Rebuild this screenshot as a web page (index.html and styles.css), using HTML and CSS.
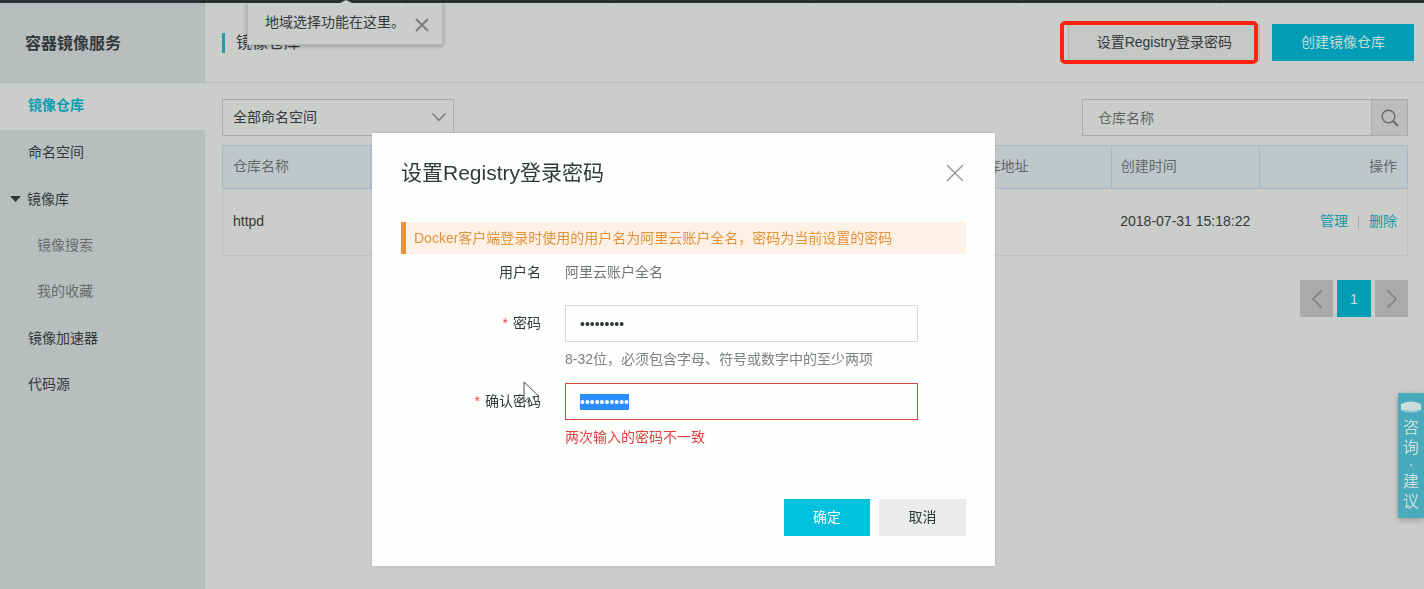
FILE: index.html
```html
<!DOCTYPE html>
<html lang="zh-CN">
<head>
<meta charset="utf-8">
<title>容器镜像服务</title>
<link rel="stylesheet" href="styles.css">
</head>
<body>
<div class="topbar"><span></span><span></span><span></span><span></span><span></span><span></span></div>

<div class="layout">
  <aside class="sidebar">
    <div class="brand">容器镜像服务</div>
    <nav>
      <a class="nav-item active" href="#">镜像仓库</a>
      <a class="nav-item" href="#">命名空间</a>
      <a class="nav-item nav-parent" href="#"><svg class="caret" viewBox="0 0 11 6"><path d="M0 0h11L5.500 6z"/></svg>镜像库</a>
      <div class="nav-sub">
        <a class="nav-item" href="#">镜像搜索</a>
        <a class="nav-item" href="#">我的收藏</a>
      </div>
      <a class="nav-item" href="#">镜像加速器</a>
      <a class="nav-item" href="#">代码源</a>
    </nav>
  </aside>

  <main class="main">
    <header class="page-head">
      <h1>镜像仓库</h1>
      <div class="actions">
        <div class="marked"><button class="btn btn-default" type="button">设置Registry登录密码</button></div>
        <button class="btn btn-create" type="button">创建镜像仓库</button>
      </div>
      <div class="tip" role="status">
        <span>地域选择功能在这里。</span>
        <button class="tip-close" type="button" aria-label="关闭提示"><svg viewBox="0 0 14 14"><path d="M1 1l12 12M13 1L1 13"/></svg></button>
      </div>
    </header>

    <section class="content">
      <div class="filters">
        <div class="select-wrap">
          <select aria-label="命名空间"><option>全部命名空间</option></select>
          <svg viewBox="0 0 14 8"><path d="M.5.5L7 7.300 13.500.5"/></svg>
        </div>
        <form class="search">
          <input type="text" placeholder="仓库名称" aria-label="仓库名称">
          <button type="button" aria-label="搜索"><svg viewBox="0 0 18 18"><circle cx="7.500" cy="7.500" r="6.300"/><path class="handle" d="M12 12l5 5"/></svg></button>
        </form>
      </div>

      <table class="repos">
        <thead>
          <tr><th>仓库名称</th><th colspan="4"></th><th>仓库地址</th><th>创建时间</th><th class="ops">操作</th></tr>
        </thead>
        <tbody>
          <tr><td>httpd</td><td colspan="4"></td><td></td><td>2018-07-31 15:18:22</td><td class="ops"><a href="#">管理</a><i></i><a href="#">删除</a></td></tr>
        </tbody>
      </table>

      <nav class="pager" aria-label="分页">
        <button type="button" aria-label="上一页"><svg viewBox="0 0 10 18"><path d="M9.500.5L1 9l8.500 8.500"/></svg></button>
        <button class="current" type="button">1</button>
        <button type="button" aria-label="下一页"><svg viewBox="0 0 10 18"><path d="M.5.5L9 9 .5 17.500"/></svg></button>
      </nav>
    </section>
  </main>
</div>

<a class="feedback" href="#">
  <svg viewBox="0 0 22 12"><path d="M1 3Q11-2 21 3v6Q11 14 1 9z"/><path class="lid" d="M2 9Q11 12 20 9"/></svg>
  <span>咨</span><span>询</span><span class="dot">·</span><span>建</span><span>议</span>
</a>

<div class="overlay">
  <div class="modal" role="dialog" aria-labelledby="dlg-title">
    <div class="modal-head">
      <h2 id="dlg-title">设置Registry登录密码</h2>
      <button type="button" aria-label="关闭"><svg viewBox="0 0 18 18"><path d="M1 1l16 16M17 1L1 17"/></svg></button>
    </div>
    <p class="notice">Docker客户端登录时使用的用户名为阿里云账户全名，密码为当前设置的密码</p>
    <form class="form">
      <span class="label">用户名</span>
      <div class="value">阿里云账户全名</div>

      <label class="label" for="pwd"><b>*</b>密码</label>
      <div class="field">
        <input id="pwd" type="password" value="registry1">
        <p>8-32位，必须包含字母、符号或数字中的至少两项</p>
      </div>

      <label class="label" for="pwd2"><b>*</b>确认密码</label>
      <div class="field invalid">
        <input id="pwd2" type="password" value="registry12">
        <p>两次输入的密码不一致</p>
      </div>
    </form>
    <div class="modal-foot">
      <button class="btn btn-ok" type="button">确定</button>
      <button class="btn btn-cancel" type="button">取消</button>
    </div>
    <svg class="pointer" viewBox="0 0 17 26"><path d="M1 1v20l5-4.500 3.500 7.500 3.500-1.500-3-7h6z"/></svg>
  </div>
</div>
<script src="main.js"></script>
</body>
</html>
```

FILE: styles.css
```css
* { box-sizing: border-box; }

body {
  margin: 0;
  min-height: 100vh;
  display: flex;
  flex-direction: column;
  background: #cbcdca;
  color: #33393b;
  font: 14px/20px "Liberation Sans", "Noto Sans CJK SC", sans-serif;
}

h1, h2, p { margin: 0; font-weight: 400; }
a { text-decoration: none; color: inherit; }
button, input, select { font: inherit; color: inherit; border-radius: 0; }
button { border: 0; padding: 0; background: none; cursor: pointer; }
svg { display: block; fill: none; }

.topbar { height: 3px; background: #2b3233; display: flex; justify-content: space-evenly; }
.topbar span { width: 1px; background: #1d2223; }

.layout { flex: 1; display: flex; }

.sidebar { width: 205px; flex: none; background: #b8bebe; }
.brand {
  height: 80px;
  line-height: 82px;
  padding-left: 25px;
  border-bottom: 1px solid #adb2b2;
  font-size: 16px;
  font-weight: 700;
}
.nav-item { display: block; height: 46px; line-height: 45px; padding-left: 28px; }
.nav-item.active { height: 47px; background: #cbcdca; color: #0b9db3; font-weight: 700; }
.nav-parent { display: flex; align-items: center; gap: 6px; padding-left: 10px; }
.caret { width: 11px; height: 6px; fill: #2e3436; }
.nav-sub { padding: 1px 0; color: #676c6d; }
.nav-sub .nav-item { padding-left: 37px; }

.main { flex: 1; min-width: 0; }
.page-head {
  position: relative;
  height: 80px;
  padding: 0 10px 0 17px;
  display: flex;
  align-items: center;
  justify-content: space-between;
  border-bottom: 1px solid #bbbdbb;
}
.page-head h1 { border-left: 3px solid #219dac; padding-left: 11px; font-size: 16px; }
.actions { display: flex; gap: 12px; }

.btn { height: 37px; padding-bottom: 2px; text-align: center; }
.marked { position: relative; }
.marked::after {
  content: "";
  position: absolute;
  inset: -3px 2px -3px -8px;
  border: 4px solid #ff2112;
  border-radius: 5px;
  pointer-events: none;
}
.btn-default { padding: 0 27px 2px 28px; background: #c5c7c5; border: 1px solid #b0b2b0; }
.btn-create { padding: 0 29px 2px; background: #039db5; color: #c5dcdc; }

.tip {
  position: absolute;
  left: 42px;
  top: 0;
  height: 42px;
  padding: 0 13px 4px 17px;
  display: flex;
  align-items: center;
  gap: 10px;
  background: #cbcdca;
  border: 1px solid #b8bab8;
  border-top: 0;
  box-shadow: 0 1px 4px rgba(0, 0, 0, .3);
}
.tip::before {
  content: "";
  position: absolute;
  top: -3px;
  left: 92px;
  border: solid transparent;
  border-width: 0 6px 3px;
  border-bottom-color: #cbcdca;
}
.tip-close { padding-top: 6px; }
.tip-close svg { width: 14px; height: 14px; stroke: #7c7f7d; stroke-width: 2; }

.content { padding: 16px 16px 0 17px; }
.filters { display: flex; justify-content: space-between; }
.select-wrap { position: relative; width: 232px; }
.select-wrap select {
  appearance: none;
  width: 100%;
  height: 37px;
  padding: 0 10px 2px;
  border: 1px solid #aaacaa;
  background: transparent;
}
.select-wrap svg {
  position: absolute;
  right: 8px;
  top: 14px;
  width: 14px;
  height: 8px;
  stroke: #777b7a;
  stroke-width: 1.5;
  pointer-events: none;
}
.search { display: flex; width: 326px; height: 37px; border: 1px solid #aaacaa; }
.search input { flex: 1; min-width: 0; border: 0; padding: 0 15px; background: transparent; }
.search input::placeholder { color: #626665; opacity: 1; }
.search button {
  width: 36px;
  display: grid;
  place-items: center;
  border-left: 1px solid #aaacaa;
  background: #bbbdbb;
}
.search svg { width: 18px; height: 18px; stroke: #666a69; stroke-width: 1.4; }
.search .handle { stroke-width: 2; }

.repos {
  width: 100%;
  margin-top: 9px;
  table-layout: fixed;
  border-collapse: collapse;
  border: 1px solid #c0c2c0;
}
.repos th {
  height: 43px;
  padding: 0 10px 2px;
  border: 1px solid #a5b7c9;
  background: #c0c7ca;
  color: #626869;
  font-weight: 400;
  text-align: left;
}
.repos td { height: 67px; padding: 0 10px 2px; white-space: nowrap; }
.repos th:nth-last-child(n+2), .repos td:nth-last-child(2) { padding-left: 9px; }
.repos th:first-child { padding-left: 10px; }
.repos .ops { text-align: right; }
.repos a { color: #1599ab; }
.repos i { display: inline-block; width: 1px; height: 13px; margin: 0 10px; background: #a6a8a6; vertical-align: -3px; }

.pager { display: flex; justify-content: flex-end; gap: 4px; margin-top: 24px; }
.pager button { width: 33px; height: 37px; display: grid; place-items: center; background: #a9abaa; }
.pager .current { width: 34px; background: #039db5; color: #d0e0df; }
.pager svg { width: 10px; height: 18px; stroke: #7f8281; stroke-width: 1.6; }

.feedback {
  position: fixed;
  right: 0;
  top: 393px;
  width: 26px;
  padding: 8px 0 6px;
  display: flex;
  flex-direction: column;
  align-items: center;
  background: #48aaba;
  color: #cbdedd;
  font-size: 16px;
  box-shadow: 0 2px 6px rgba(0, 0, 0, .25);
}
.feedback svg { width: 22px; height: 12px; margin-bottom: 5px; fill: #cbdedd; }
.feedback .lid { fill: none; stroke: #7fbfca; }
.feedback .dot { height: 14px; line-height: 14px; }

.overlay {
  position: fixed;
  inset: 0;
  padding: 133px 57px 0 0;
  display: flex;
  justify-content: center;
  align-items: flex-start;
  pointer-events: none;
}
.modal {
  position: relative;
  width: 623px;
  padding: 24px 29px 30px;
  background: #fdfffc;
  box-shadow: 0 0 2px rgba(0, 0, 0, .15);
  pointer-events: auto;
}
.modal-head { display: flex; justify-content: space-between; align-items: center; height: 32px; }
.modal-head h2 { font-size: 21px; line-height: 32px; }
.modal-head button svg { width: 18px; height: 18px; margin-right: 2px; stroke: #999c9a; stroke-width: 1.5; }
.notice {
  margin-top: 33px;
  padding-left: 8px;
  border-left: 5px solid #e8923a;
  background: #fdf1e5;
  color: #e39339;
  line-height: 32px;
}
.form {
  display: grid;
  grid-template-columns: 140px 353px;
  column-gap: 24px;
  row-gap: 14px;
}
.label { text-align: right; line-height: 37px; }
.label b { margin-right: 5px; color: #e5484a; font-weight: 400; }
.value { line-height: 37px; color: #707473; }
.field input {
  display: block;
  width: 100%;
  height: 37px;
  padding: 0 14px;
  border: 1px solid #d6d8d6;
  background: transparent;
  outline: 0;
}
.field p { margin-top: 7px; color: #7c807f; }
.field.invalid input { border-color: #d9443f; }
.field.invalid p { color: #e0403f; }
.invalid input::selection { background: #2b8cff; color: #fff; }

.modal-foot { display: flex; justify-content: flex-end; gap: 9px; margin-top: 52px; }
.btn-ok { width: 86px; background: #00c1de; color: #fff; }
.btn-cancel { width: 87px; background: #eaebeb; }

.pointer {
  position: absolute;
  left: 151px;
  top: 248px;
  width: 17px;
  height: 26px;
  fill: #fdfffc;
  stroke: #4a4f51;
  pointer-events: none;
}
```

FILE: main.js
```js
document.getElementById("pwd2").select();
```
